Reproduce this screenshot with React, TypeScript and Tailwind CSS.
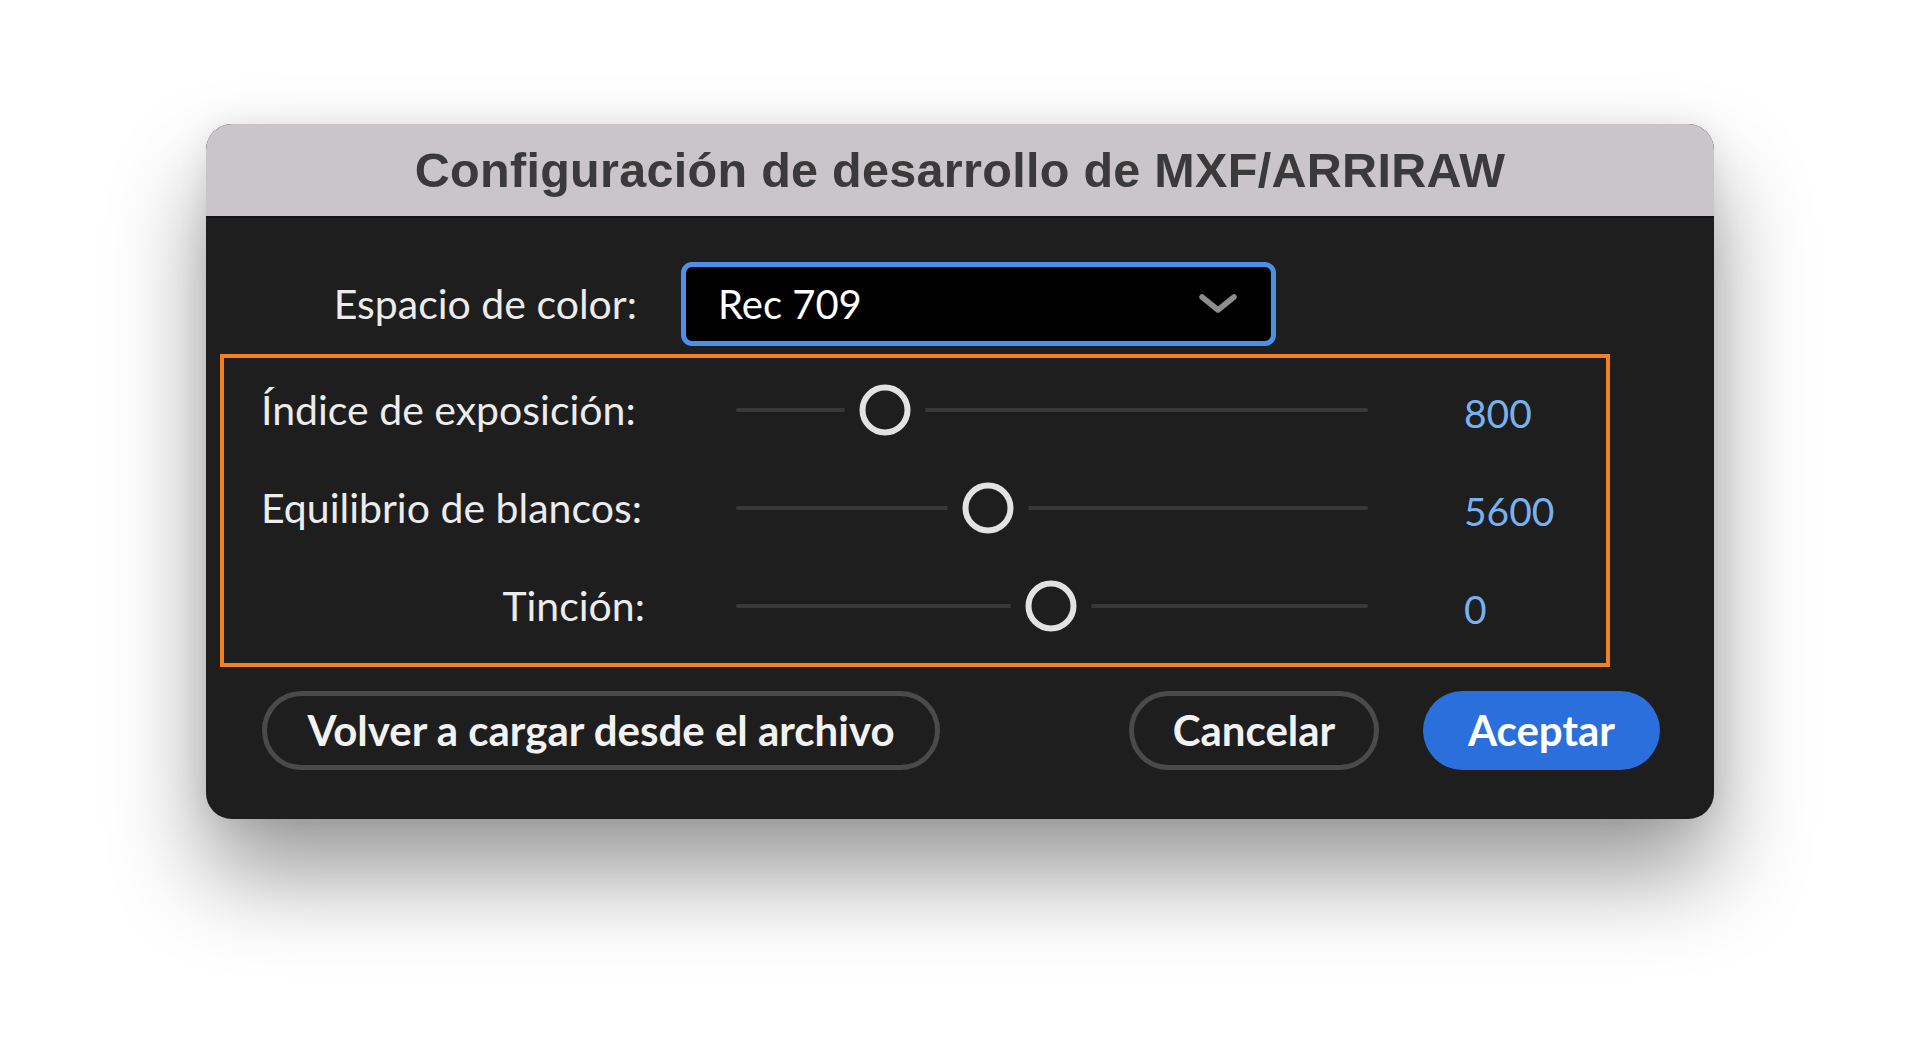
import React from "react";

const sliders = [
  { label: "Índice de exposición:", value: "800", pos: 149, align: "text-left" },
  { label: "Equilibrio de blancos:", value: "5600", pos: 252, align: "text-left" },
  { label: "Tinción:", value: "0", pos: 315, align: "text-right" },
];

function Slider({ pos }: { pos: number }) {
  return (
    <div className="relative h-[60px] w-[632px] flex items-center">
      <div className="h-[4px] w-full rounded-full bg-[#383838]" />
      {/* thumb with a ring of panel colour cutting the track */}
      <div
        className="absolute top-1/2 h-[51px] w-[51px] -translate-x-1/2 -translate-y-1/2 rounded-full border-[6px] border-[#e2e2e2] bg-[#1e1e1e] shadow-[0_0_0_15px_#1e1e1e]"
        style={{ left: pos }}
      />
    </div>
  );
}

export default function App() {
  return (
    <div
      className="min-h-screen w-full bg-white pl-[206px] pt-[124px]"
      style={{ fontFamily: "Lato, 'Noto Sans', sans-serif" }}
    >
      <div className="w-[1508px] rounded-[26px] overflow-hidden bg-[#1e1e1e] shadow-[0_55px_95px_rgba(0,0,0,0.4),0_0_30px_rgba(0,0,0,0.08)]">
        {/* Title bar */}
        <div className="h-[94px] bg-[#c9c5c9] border-b-2 border-[#151515] flex items-center justify-center">
          <h1
            className="text-[48.5px] font-bold text-[#3a3a3a] tracking-[0.3px]"
            style={{ fontFamily: "'Liberation Sans', Arial, sans-serif" }}
          >
            Configuración de desarrollo de MXF/ARRIRAW
          </h1>
        </div>

        <div className="pt-[44px] pb-[49px]">
          {/* Colour space */}
          <div className="flex items-center">
            <div className="w-[431px] text-right text-[41px] text-[#ececec]">Espacio de color:</div>
            <div className="ml-[44px] h-[84px] w-[595px] rounded-[11px] border-[5px] border-[#4c90ea] bg-black flex items-center justify-between pl-[32px] pr-[34px]">
              <span className="text-[40px] text-white">Rec 709</span>
              <svg width="38" height="20" viewBox="0 0 38 20" fill="none">
                <path d="M3 3 L19 16 L35 3" stroke="#8d8d8d" strokeWidth="5.5" strokeLinecap="round" strokeLinejoin="round" />
              </svg>
            </div>
          </div>

          {/* Highlighted sliders */}
          <div className="ml-[14px] mt-[8px] w-[1390px] border-4 border-[#f5801f] pt-[3px] pb-[8px] pl-[37px]">
            {sliders.map((s) => (
              <div key={s.label} className="h-[98px] flex items-center">
                <div className={`w-[384px] text-[41px] text-[#ececec] ${s.align}`}>{s.label}</div>
                <div className="ml-[91px]">
                  <Slider pos={s.pos} />
                </div>
                <div className="ml-[96px] pt-[6px] text-[39px] text-[#78b1f0]">{s.value}</div>
              </div>
            ))}
          </div>

          {/* Buttons */}
          <div className="mt-[24px] flex items-center pl-[56px] pr-[54px]">
            <button className="h-[79px] w-[678px] rounded-full border-[5px] border-[#4a4a4a] text-[42px] font-bold text-[#f2f2f2]">
              Volver a cargar desde el archivo
            </button>
            <div className="flex-1" />
            <button className="h-[79px] w-[250px] rounded-full border-[5px] border-[#4a4a4a] text-[42px] font-bold text-[#f2f2f2]">
              Cancelar
            </button>
            <button className="ml-[44px] h-[79px] w-[237px] rounded-full bg-[#2b6fdc] text-[42px] font-bold text-white">
              Aceptar
            </button>
          </div>
        </div>
      </div>
    </div>
  );
}
